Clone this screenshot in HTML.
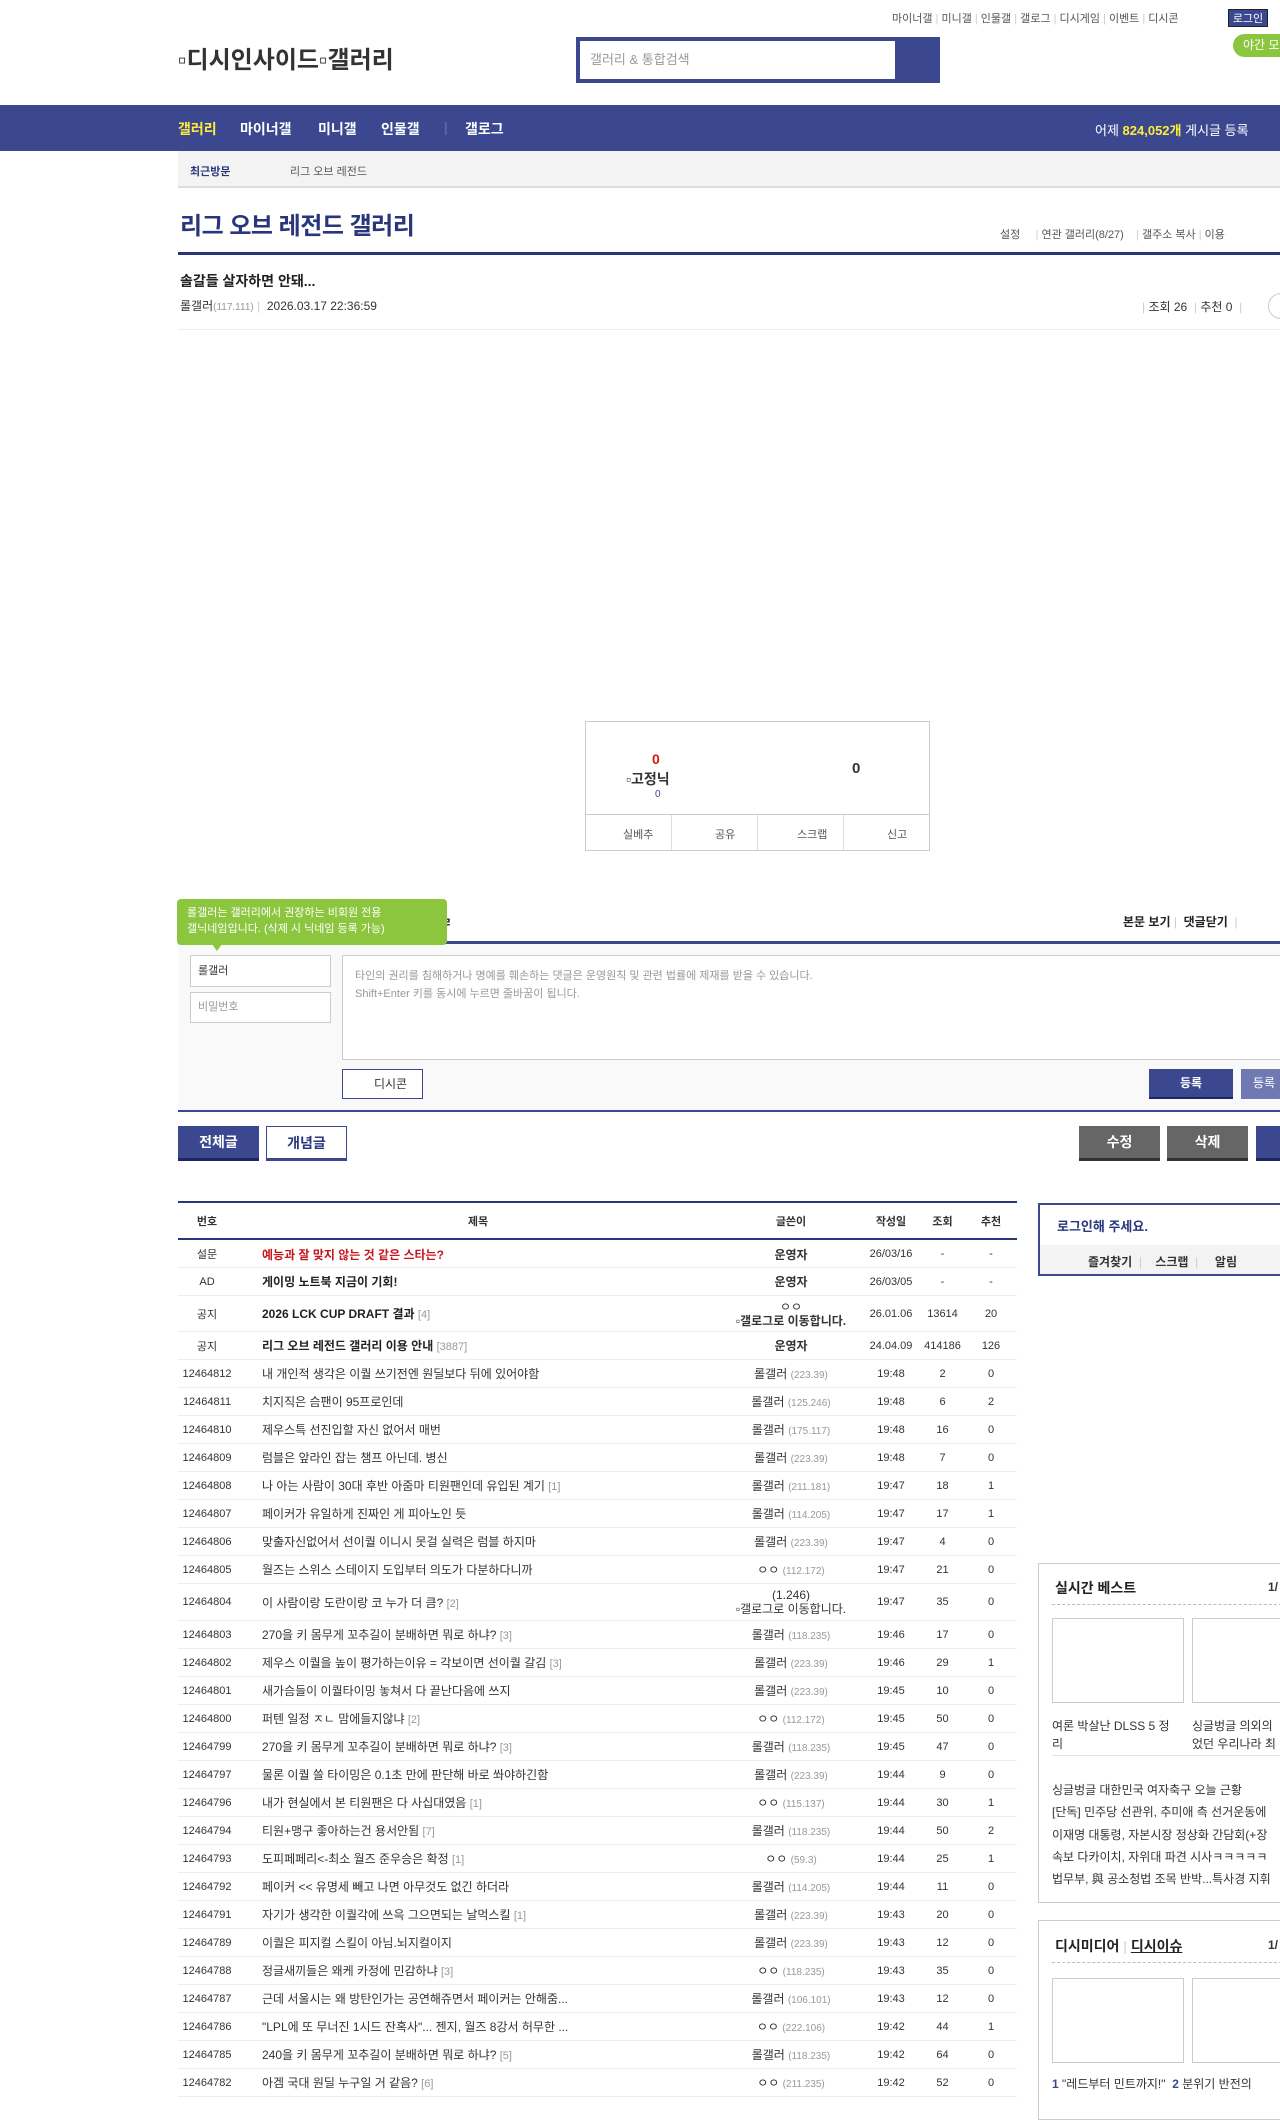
<!DOCTYPE html>
<html><head><meta charset="utf-8">
<style>
*{margin:0;padding:0;box-sizing:border-box}
body{width:1280px;height:2092px;overflow:hidden;background:#fff;font-family:"Liberation Sans","Noto Sans CJK KR",sans-serif;color:#333;position:relative;font-size:12px}
.a{position:absolute;white-space:nowrap}
.topl{top:10px;font-size:11px;color:#555}
.nav{position:absolute;left:0;top:105px;width:1280px;height:46px;background:#3b4890}
.nav span{position:absolute;top:14px;font-size:14px;font-weight:bold;color:#fff}
.row{position:absolute;left:178px;width:839px;height:28px;border-bottom:1px solid #eee;display:flex;align-items:center;font-size:12px}
.c1{width:58px;text-align:center;font-size:11px;color:#333}
.c2{width:484px;padding-left:26px;color:#333;overflow:hidden}
.c3{width:142px;text-align:center}
.c4{width:58px;text-align:center;font-size:11px}
.c5{width:45px;text-align:center;font-size:11px}
.c6{width:52px;text-align:center;font-size:11px}
.ip{color:#999;font-size:10px}
.rc{color:#999;font-size:11px}
.btn{position:absolute;height:35px;font-size:14px;font-weight:bold;color:#fff;text-align:center;line-height:33px;border-bottom:3px solid #222}
.thumb{position:absolute;border:1px solid #ccc;background:#fff}
</style></head><body>

<!-- top links -->
<div class="a topl" style="left:892px">마이너갤 <span style="color:#ccc">|</span> 미니갤 <span style="color:#ccc">|</span> 인물갤 <span style="color:#ccc">|</span> 갤로그 <span style="color:#ccc">|</span> 디시게임 <span style="color:#ccc">|</span> 이벤트 <span style="color:#ccc">|</span> 디시콘</div>
<div class="a" style="left:1228px;top:9px;width:40px;height:18px;background:#3b4890;color:#fff;font-size:11px;text-align:center;line-height:18px;border:1px solid #222">로그인</div>
<div class="a" style="left:1233px;top:34px;width:60px;height:23px;background:#8cc63f;border-radius:12px;color:#fff;font-size:12px;line-height:23px;padding-left:10px">야간 모드</div>

<div class="a" style="left:178px;top:40px;font-size:24px;font-weight:bold;color:#333">▫디시인사이드▫갤러리</div>
<div class="a" style="left:576px;top:37px;width:364px;height:46px;background:#3b4890"></div>
<div class="a" style="left:580px;top:41px;width:315px;height:38px;background:#fff;color:#999;font-size:13px;line-height:38px;padding-left:10px">갤러리 &amp; 통합검색</div>

<div class="nav">
<span style="left:178px;color:#ffeb3b">갤러리</span>
<span style="left:240px">마이너갤</span>
<span style="left:318px">미니갤</span>
<span style="left:381px">인물갤</span>
<span style="left:444px;color:#6a76b5;font-weight:normal">|</span>
<span style="left:465px">갤로그</span>
<span style="left:1095px;font-weight:normal;font-size:13px;top:15px">어제 <b style="color:#ffeb3b">824,052개</b> 게시글 등록</span>
</div>

<div class="a" style="left:178px;top:151px;width:1120px;height:37px;background:#f3f3f3;border-bottom:2px solid #ddd"></div>
<div class="a" style="left:190px;top:163px;font-size:11px;font-weight:bold;color:#29367c">최근방문</div>
<div class="a" style="left:290px;top:163px;font-size:11px;color:#555">리그 오브 레전드</div>

<div class="a" style="left:180px;top:206px;font-size:24px;font-weight:bold;color:#29367c;letter-spacing:-0.5px">리그 오브 레전드 갤러리</div>
<div class="a" style="left:1000px;top:226px;font-size:11px;color:#555">설정 &nbsp;&nbsp;&nbsp;&nbsp;<span style="color:#ccc">|</span> 연관 갤러리(8/27) &nbsp;&nbsp;&nbsp;<span style="color:#ccc">|</span> 갤주소 복사 <span style="color:#ccc">|</span> 이용</div>
<div class="a" style="left:178px;top:252px;width:1110px;height:3px;background:#29367c"></div>

<div class="a" style="left:180px;top:271px;font-size:14px;font-weight:bold;color:#222">솔갈들 살자하면 안돼...</div>
<div class="a" style="left:180px;top:297px;font-size:12px;color:#333">롤갤러<span class="ip">(117.111)</span> <span style="color:#ccc">|</span> &nbsp;2026.03.17 22:36:59</div>
<div class="a" style="left:1142px;top:298px;font-size:12px;color:#333"><span style="color:#ccc">|</span> 조회 26 &nbsp;<span style="color:#ccc">|</span> 추천 0 &nbsp;<span style="color:#ccc">|</span></div>
<div class="a" style="left:1268px;top:293px;width:26px;height:26px;border:1px solid #ccc;border-radius:13px"></div>
<div class="a" style="left:178px;top:329px;width:1110px;height:1px;background:#eee"></div>

<!-- recommend box -->
<div class="a" style="left:585px;top:721px;width:345px;height:130px;border:1px solid #ccc"></div>
<div class="a" style="left:585px;top:814px;width:345px;height:1px;background:#ccc"></div>
<div class="a" style="left:671px;top:815px;width:1px;height:35px;background:#ddd"></div>
<div class="a" style="left:757px;top:815px;width:1px;height:35px;background:#ddd"></div>
<div class="a" style="left:843px;top:815px;width:1px;height:35px;background:#ddd"></div>
<div class="a" style="left:623px;top:826px;font-size:11px;color:#555">실베추</div>
<div class="a" style="left:715px;top:826px;font-size:11px;color:#555">공유</div>
<div class="a" style="left:797px;top:826px;font-size:11px;color:#555">스크랩</div>
<div class="a" style="left:887px;top:826px;font-size:11px;color:#555">신고</div>
<div class="a" style="left:652px;top:751px;font-size:14px;font-weight:bold;color:#d31900">0</div>
<div class="a" style="left:626px;top:769px;font-size:14px;font-weight:bold;color:#333">▫고정닉</div>
<div class="a" style="left:655px;top:789px;font-size:10px;color:#3b4890">0</div>
<div class="a" style="left:852px;top:760px;font-size:15px;font-weight:bold;color:#333">0</div>

<!-- comment -->
<div class="a" style="left:440px;top:912px;font-size:13px;font-weight:bold">ㄹ</div>
<div class="a" style="left:1123px;top:913px;font-size:12px;font-weight:bold;color:#222">본문 보기 <span style="color:#ccc;font-weight:normal">|</span> &nbsp;댓글닫기 &nbsp;<span style="color:#ccc;font-weight:normal">|</span></div>
<div class="a" style="left:178px;top:941px;width:1110px;height:171px;background:#f9f9f9;border-top:3px solid #3b4890;border-bottom:2px solid #3b4890"></div>
<div class="a" style="left:177px;top:899px;width:270px;height:46px;background:#8cc63f;border-radius:4px;color:#fff;font-size:11px;line-height:16px;padding:6px 10px">롤갤러는 갤러리에서 권장하는 비회원 전용<br>갤닉네임입니다. (삭제 시 닉네임 등록 가능)</div>
<div class="a" style="left:212px;top:944px;width:0;height:0;border-left:5px solid transparent;border-right:5px solid transparent;border-top:7px solid #8cc63f"></div>
<div class="a" style="left:190px;top:955px;width:141px;height:32px;background:#fff;border:1px solid #ccc;font-size:11px;color:#333;line-height:30px;padding-left:7px">롤갤러</div>
<div class="a" style="left:190px;top:992px;width:141px;height:31px;background:#fff;border:1px solid #ccc;font-size:11px;color:#999;line-height:29px;padding-left:7px">비밀번호</div>
<div class="a" style="left:342px;top:955px;width:950px;height:105px;background:#fff;border:1px solid #ccc;font-size:11px;color:#999;line-height:18px;padding:11px 12px">타인의 권리를 침해하거나 명예를 훼손하는 댓글은 운영원칙 및 관련 법률에 제재를 받을 수 있습니다.<br>Shift+Enter 키를 동시에 누르면 줄바꿈이 됩니다.</div>
<div class="a" style="left:342px;top:1069px;width:81px;height:30px;background:#fff;border:1px solid #3b4890;font-size:12px;color:#333;line-height:28px;text-align:center;padding-left:16px">디시콘</div>
<div class="a" style="left:1149px;top:1069px;width:84px;height:30px;background:#3b4890;border-bottom:2px solid #1d2660;color:#fff;font-size:12px;font-weight:bold;line-height:28px;text-align:center">등록</div>
<div class="a" style="left:1241px;top:1069px;width:60px;height:30px;background:#6f7ab3;color:#fff;font-size:12px;line-height:28px;padding-left:12px">등록</div>

<div class="btn" style="left:178px;top:1126px;width:81px;background:#3b4890;border-color:#1d2660">전체글</div>
<div class="btn" style="left:266px;top:1126px;width:81px;background:#fff;color:#29367c;border:1px solid #3b4890;border-bottom:3px solid #3b4890">개념글</div>
<div class="btn" style="left:1079px;top:1126px;width:81px;background:#666;border-color:#333">수정</div>
<div class="btn" style="left:1167px;top:1126px;width:81px;background:#666;border-color:#333">삭제</div>
<div class="btn" style="left:1256px;top:1126px;width:81px;background:#3b4890;border-color:#1d2660">글</div>

<!-- list table -->
<div class="a" style="left:178px;top:1201px;width:839px;height:2px;background:#29367c"></div>
<div class="row" style="top:1203px;height:37px;border-bottom:2px solid #29367c;font-weight:bold;font-size:11px">
<div class="c1">번호</div><div class="c2" style="text-align:center;padding-left:0">제목</div><div class="c3" style="font-size:11px">글쓴이</div><div class="c4">작성일</div><div class="c5">조회</div><div class="c6">추천</div></div>

<div class="row" style="top:1241px;height:27px"><div class="c1">설문</div><div class="c2" style="font-weight:bold;color:#c4161c">예능과 잘 맞지 않는 것 같은 스타는?</div><div class="c3" style="font-weight:bold">운영자</div><div class="c4">26/03/16</div><div class="c5">-</div><div class="c6">-</div></div>
<div class="row" style="top:1268px"><div class="c1">AD</div><div class="c2" style="font-weight:bold;color:#222">게이밍 노트북 지금이 기회!</div><div class="c3" style="font-weight:bold">운영자</div><div class="c4">26/03/05</div><div class="c5">-</div><div class="c6">-</div></div>
<div class="row" style="top:1296px;height:36px"><div class="c1">공지</div><div class="c2" style="font-weight:bold;color:#222">2026 LCK CUP DRAFT 결과 <span class="rc" style="font-weight:normal">[4]</span></div><div class="c3" style="line-height:14px">ㅇㅇ<br><b>▫갤로그로 이동합니다.</b></div><div class="c4">26.01.06</div><div class="c5">13614</div><div class="c6">20</div></div>
<div class="row" style="top:1332px"><div class="c1">공지</div><div class="c2" style="font-weight:bold;color:#222">리그 오브 레전드 갤러리 이용 안내 <span class="rc" style="font-weight:normal">[3887]</span></div><div class="c3" style="font-weight:bold">운영자</div><div class="c4">24.04.09</div><div class="c5">414186</div><div class="c6">126</div></div>

<div class="row" style="top:1360px"><div class="c1">12464812</div><div class="c2">내 개인적 생각은 이퀄 쓰기전엔 원딜보다 뒤에 있어야함</div><div class="c3">롤갤러 <span class="ip">(223.39)</span></div><div class="c4">19:48</div><div class="c5">2</div><div class="c6">0</div></div>
<div class="row" style="top:1388px"><div class="c1">12464811</div><div class="c2">치지직은 슴팬이 95프로인데</div><div class="c3">롤갤러 <span class="ip">(125.246)</span></div><div class="c4">19:48</div><div class="c5">6</div><div class="c6">2</div></div>
<div class="row" style="top:1416px"><div class="c1">12464810</div><div class="c2">제우스특 선진입할 자신 없어서 매번</div><div class="c3">롤갤러 <span class="ip">(175.117)</span></div><div class="c4">19:48</div><div class="c5">16</div><div class="c6">0</div></div>
<div class="row" style="top:1444px"><div class="c1">12464809</div><div class="c2">럼블은 앞라인 잡는 챔프 아닌데. 병신</div><div class="c3">롤갤러 <span class="ip">(223.39)</span></div><div class="c4">19:48</div><div class="c5">7</div><div class="c6">0</div></div>
<div class="row" style="top:1472px"><div class="c1">12464808</div><div class="c2">나 아는 사람이 30대 후반 아줌마 티원팬인데 유입된 계기 <span class="rc">[1]</span></div><div class="c3">롤갤러 <span class="ip">(211.181)</span></div><div class="c4">19:47</div><div class="c5">18</div><div class="c6">1</div></div>
<div class="row" style="top:1500px"><div class="c1">12464807</div><div class="c2">페이커가 유일하게 진짜인 게 피아노인 듯</div><div class="c3">롤갤러 <span class="ip">(114.205)</span></div><div class="c4">19:47</div><div class="c5">17</div><div class="c6">1</div></div>
<div class="row" style="top:1528px"><div class="c1">12464806</div><div class="c2">맞출자신없어서 선이퀄 이니시 못걸 실력은 럼블 하지마</div><div class="c3">롤갤러 <span class="ip">(223.39)</span></div><div class="c4">19:47</div><div class="c5">4</div><div class="c6">0</div></div>
<div class="row" style="top:1556px"><div class="c1">12464805</div><div class="c2">월즈는 스위스 스테이지 도입부터 의도가 다분하다니까</div><div class="c3">ㅇㅇ <span class="ip">(112.172)</span></div><div class="c4">19:47</div><div class="c5">21</div><div class="c6">0</div></div>
<div class="row" style="top:1584px;height:37px"><div class="c1">12464804</div><div class="c2">이 사람이랑 도란이랑 코 누가 더 큼? <span class="rc">[2]</span></div><div class="c3" style="line-height:14px">(1.246)<br>▫갤로그로 이동합니다.</div><div class="c4">19:47</div><div class="c5">35</div><div class="c6">0</div></div>
<div class="row" style="top:1621px"><div class="c1">12464803</div><div class="c2">270을 키 몸무게 꼬추길이 분배하면 뭐로 하냐? <span class="rc">[3]</span></div><div class="c3">롤갤러 <span class="ip">(118.235)</span></div><div class="c4">19:46</div><div class="c5">17</div><div class="c6">0</div></div>
<div class="row" style="top:1649px"><div class="c1">12464802</div><div class="c2">제우스 이퀄을 높이 평가하는이유 = 각보이면 선이퀄 갈김 <span class="rc">[3]</span></div><div class="c3">롤갤러 <span class="ip">(223.39)</span></div><div class="c4">19:46</div><div class="c5">29</div><div class="c6">1</div></div>
<div class="row" style="top:1677px"><div class="c1">12464801</div><div class="c2">새가슴들이 이퀄타이밍 놓쳐서 다 끝난다음에 쓰지</div><div class="c3">롤갤러 <span class="ip">(223.39)</span></div><div class="c4">19:45</div><div class="c5">10</div><div class="c6">0</div></div>
<div class="row" style="top:1705px"><div class="c1">12464800</div><div class="c2">퍼텐 일정 ㅈㄴ 맘에들지않냐 <span class="rc">[2]</span></div><div class="c3">ㅇㅇ <span class="ip">(112.172)</span></div><div class="c4">19:45</div><div class="c5">50</div><div class="c6">0</div></div>
<div class="row" style="top:1733px"><div class="c1">12464799</div><div class="c2">270을 키 몸무게 꼬추길이 분배하면 뭐로 하냐? <span class="rc">[3]</span></div><div class="c3">롤갤러 <span class="ip">(118.235)</span></div><div class="c4">19:45</div><div class="c5">47</div><div class="c6">0</div></div>
<div class="row" style="top:1761px"><div class="c1">12464797</div><div class="c2">물론 이퀄 쓸 타이밍은 0.1초 만에 판단해 바로 쏴야하긴함</div><div class="c3">롤갤러 <span class="ip">(223.39)</span></div><div class="c4">19:44</div><div class="c5">9</div><div class="c6">0</div></div>
<div class="row" style="top:1789px"><div class="c1">12464796</div><div class="c2">내가 현실에서 본 티원팬은 다 사십대였음 <span class="rc">[1]</span></div><div class="c3">ㅇㅇ <span class="ip">(115.137)</span></div><div class="c4">19:44</div><div class="c5">30</div><div class="c6">1</div></div>
<div class="row" style="top:1817px"><div class="c1">12464794</div><div class="c2">티원+맹구 좋아하는건 용서안됨 <span class="rc">[7]</span></div><div class="c3">롤갤러 <span class="ip">(118.235)</span></div><div class="c4">19:44</div><div class="c5">50</div><div class="c6">2</div></div>
<div class="row" style="top:1845px"><div class="c1">12464793</div><div class="c2">도피페페리&lt;-최소 월즈 준우승은 확정 <span class="rc">[1]</span></div><div class="c3">ㅇㅇ <span class="ip">(59.3)</span></div><div class="c4">19:44</div><div class="c5">25</div><div class="c6">1</div></div>
<div class="row" style="top:1873px"><div class="c1">12464792</div><div class="c2">페이커 &lt;&lt; 유명세 빼고 나면 아무것도 없긴 하더라</div><div class="c3">롤갤러 <span class="ip">(114.205)</span></div><div class="c4">19:44</div><div class="c5">11</div><div class="c6">0</div></div>
<div class="row" style="top:1901px"><div class="c1">12464791</div><div class="c2">자기가 생각한 이퀄각에 쓰윽 그으면되는 날먹스킬 <span class="rc">[1]</span></div><div class="c3">롤갤러 <span class="ip">(223.39)</span></div><div class="c4">19:43</div><div class="c5">20</div><div class="c6">0</div></div>
<div class="row" style="top:1929px"><div class="c1">12464789</div><div class="c2">이퀄은 피지컬 스킬이 아님.뇌지컬이지</div><div class="c3">롤갤러 <span class="ip">(223.39)</span></div><div class="c4">19:43</div><div class="c5">12</div><div class="c6">0</div></div>
<div class="row" style="top:1957px"><div class="c1">12464788</div><div class="c2">정글새끼들은 왜케 카정에 민감하냐 <span class="rc">[3]</span></div><div class="c3">ㅇㅇ <span class="ip">(118.235)</span></div><div class="c4">19:43</div><div class="c5">35</div><div class="c6">0</div></div>
<div class="row" style="top:1985px"><div class="c1">12464787</div><div class="c2">근데 서울시는 왜 방탄인가는 공연해쥬면서 페이커는 안해줌...</div><div class="c3">롤갤러 <span class="ip">(106.101)</span></div><div class="c4">19:43</div><div class="c5">12</div><div class="c6">0</div></div>
<div class="row" style="top:2013px"><div class="c1">12464786</div><div class="c2">"LPL에 또 무너진 1시드 잔혹사"... 젠지, 월즈 8강서 허무한 ...</div><div class="c3">ㅇㅇ <span class="ip">(222.106)</span></div><div class="c4">19:42</div><div class="c5">44</div><div class="c6">1</div></div>
<div class="row" style="top:2041px"><div class="c1">12464785</div><div class="c2">240을 키 몸무게 꼬추길이 분배하면 뭐로 하냐? <span class="rc">[5]</span></div><div class="c3">롤갤러 <span class="ip">(118.235)</span></div><div class="c4">19:42</div><div class="c5">64</div><div class="c6">0</div></div>
<div class="row" style="top:2069px"><div class="c1">12464782</div><div class="c2">아겜 국대 원딜 누구일 거 같음? <span class="rc">[6]</span></div><div class="c3">ㅇㅇ <span class="ip">(211.235)</span></div><div class="c4">19:42</div><div class="c5">52</div><div class="c6">0</div></div>

<!-- sidebar -->
<div class="a" style="left:1038px;top:1203px;width:260px;height:73px;border:2px solid #3b4890;border-top:2px solid #3b4890;background:#fff"></div>
<div class="a" style="left:1040px;top:1245px;width:258px;height:29px;background:#f3f3f3"></div>
<div class="a" style="left:1057px;top:1216px;font-size:13px;font-weight:bold;color:#29367c">로그인해 주세요.</div>
<div class="a" style="left:1088px;top:1253px;font-size:12px;font-weight:bold;color:#333">즐겨찾기 <span style="color:#ccc;font-weight:normal">&nbsp;|&nbsp;</span> &nbsp;&nbsp;스크랩 <span style="color:#ccc;font-weight:normal">&nbsp;|&nbsp;</span> &nbsp;&nbsp;&nbsp;알림</div>

<div class="a" style="left:1038px;top:1563px;width:260px;height:340px;border:1px solid #ccc"></div>
<div class="a" style="left:1055px;top:1578px;font-size:14px;font-weight:bold;color:#222">실시간 베스트</div>
<div class="a" style="left:1268px;top:1580px;font-size:12px;font-weight:bold">1/</div>
<div class="a" style="left:1052px;top:1604px;width:240px;border-top:1px dashed #bbb"></div>
<div class="thumb" style="left:1052px;top:1618px;width:132px;height:85px"></div>
<div class="thumb" style="left:1192px;top:1618px;width:132px;height:85px"></div>
<div class="a" style="left:1052px;top:1717px;font-size:12px;line-height:18px;color:#333">여론 박살난 DLSS 5 정<br>리</div>
<div class="a" style="left:1192px;top:1717px;font-size:12px;line-height:18px;color:#333">싱글벙글 의외의<br>었던 우리나라 최</div>
<div class="a" style="left:1052px;top:1755px;width:240px;height:1px;background:#e5e5e5"></div>
<div class="a" style="left:1052px;top:1779px;font-size:12px;line-height:22.3px;color:#333">싱글벙글 대한민국 여자축구 오늘 근황<br>[단독] 민주당 선관위, 추미애 측 선거운동에<br>이재명 대통령, 자본시장 정상화 간담회(+장<br>속보 다카이치, 자위대 파견 시사ㅋㅋㅋㅋㅋ<br>법무부, 與 공소청법 조목 반박...특사경 지휘</div>

<div class="a" style="left:1038px;top:1920px;width:260px;height:200px;border:1px solid #ccc"></div>
<div class="a" style="left:1055px;top:1936px;font-size:14px;font-weight:bold;color:#222">디시미디어 <span style="color:#ccc;font-weight:normal">|</span> <span style="text-decoration:underline">디시이슈</span></div>
<div class="a" style="left:1268px;top:1938px;font-size:12px;font-weight:bold">1/</div>
<div class="a" style="left:1052px;top:1962px;width:240px;border-top:1px dashed #bbb"></div>
<div class="thumb" style="left:1052px;top:1978px;width:132px;height:85px"></div>
<div class="thumb" style="left:1192px;top:1978px;width:132px;height:85px"></div>
<div class="a" style="left:1052px;top:2075px;font-size:12px;color:#333"><b style="color:#3b4890">1</b> "레드부터 민트까지!" &nbsp;<b style="color:#3b4890">2</b> 분위기 반전의</div>
</body></html>
